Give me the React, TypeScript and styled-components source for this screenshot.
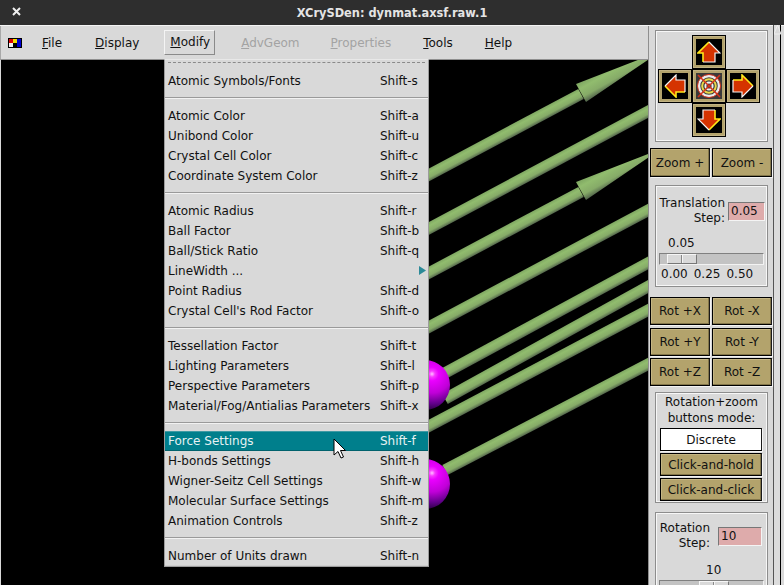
import React from "react";
import styled, { createGlobalStyle } from "styled-components";

const Global = createGlobalStyle`
  html, body { margin: 0; padding: 0; background: #d9d9d9; }
  body { font-family: "DejaVu Sans", sans-serif; font-size: 12px; color: #111; }
`;

const Window = styled.div`
  position: relative; width: 784px; height: 585px; overflow: hidden;
  display: flex; flex-direction: column; background: #d9d9d9;
`;
const TitleBar = styled.header`
  height: 25px; flex: none; background: #2e2e2e; border-bottom: 1px solid #f4f4f4;
  display: flex; align-items: center; justify-content: center; position: relative;
  color: #e4e4e4; font-weight: bold; font-size: 11.4px;
`;
const CloseIcon = styled.svg`
  position: absolute; left: 12px; top: 7px; width: 9px; height: 9px;
`;
const Body = styled.div`flex: 1; min-height: 0; display: flex;`;
const Left = styled.div`width: 648px; flex: none; display: flex; flex-direction: column;`;
const MenuBar = styled.nav`
  height: 33px; flex: none; display: flex; align-items: center; background: #d9d9d9;
  border-bottom: 1px solid #8f8f8f; border-left: 1px solid #a8a8a8;
`;
const MenuIcon = styled.svg`width: 14px; height: 10px; margin-left: 7px; flex: none;`;
const MenuBarItem = styled.span<{ $left: number; $off?: boolean; $open?: boolean }>`
  margin-left: ${p => p.$left}px;
  color: ${p => (p.$off ? "#a3a3a3" : "#111")};
  ${p => p.$open ? `
    padding: 4px 4px 5px 5px; border: 1px solid; border-color: #f4f4f4 #8a8a8a #8a8a8a #f4f4f4;
  ` : ""}
`;
const Canvas = styled.main`flex: 1; min-height: 0; margin-left: 1px; background: #000; overflow: hidden;`;
const SceneSvg = styled.svg`display: block; width: 647px; height: 525px;`;

const Menu = styled.div`
  position: absolute; left: 164px; top: 59px; width: 265px; height: 508px; box-sizing: border-box;
  background: #d9d9d9; border: 1px solid #9c9c9c; border-top-color: #e8e8e8; box-shadow: inset 0 -1px 0 #cfcfcf;
`;
const Tearoff = styled.div`
  height: 11px; margin: 0 1px; position: relative;
  &::after { content: ""; position: absolute; left: 2px; right: 2px; top: 2px; border-top: 1px dashed #8a8a8a; }
`;
const MenuRow = styled.div<{ $active?: boolean }>`
  position: relative; height: 20px; box-sizing: border-box; display: grid; grid-template-columns: 212px 1fr;
  align-items: center; padding-left: 3px; white-space: nowrap;
  background: ${p => (p.$active ? "#007f8c" : "transparent")};
  color: ${p => (p.$active ? "#e6f2f3" : "#111")};
  ${p => (p.$active ? "box-shadow: inset 0 1px 0 #3f9aa4, inset 0 -1px 0 #00626d;" : "")}
`;
const Sep = styled.div`
  height: 15px; box-sizing: border-box; padding-bottom: 2px; display: flex; align-items: center;
  &::after { content: ""; flex: 1; height: 1px; background: #9a9a9a; box-shadow: 0 1px 0 #f2f2f2; }
`;
const SubArrow = styled.svg`position: absolute; right: 2px; top: 5px; width: 7px; height: 9px;`;
const Pointer = styled.svg`position: absolute; left: 333px; top: 438px; width: 14px; height: 22px;`;

const Panel = styled.aside`
  flex: 1; min-width: 0; display: flex; border-left: 1px solid #8f8f8f;
`;
const PanelContent = styled.div`
  width: 123px; flex: none; margin-left: 1px; padding-top: 4px; overflow: hidden;
  display: flex; flex-direction: column;
`;
const ScrollBar = styled.div`
  width: 8px; flex: none; position: relative; box-sizing: border-box; background: #dcdcdc;
  border-left: 1px solid #555; border-right: 1px solid #000; margin-top: -1px;
`;
const ScrollArrow = styled.svg`position: absolute; left: 0; top: 0; width: 7px; height: 10px;`;
const Frame = styled.section<{ $h: number; $mt?: number; $pt?: number }>`
  margin: ${p => p.$mt ?? 0}px 5px 0 5px; height: ${p => p.$h}px; flex: none; box-sizing: border-box;
  border: 1px solid #8d8d8d; box-shadow: inset 0 0 0 1px #f7f7f7; padding: ${p => p.$pt ?? 4}px 3px 4px 3px; position: relative;
`;
const NavGrid = styled.div`
  display: grid; grid-template-columns: repeat(3, 34px); grid-template-rows: repeat(3, 34px);
  margin-left: -1px;
`;
const NavButton = styled.button<{ $col: number; $row: number }>`
  grid-column: ${p => p.$col}; grid-row: ${p => p.$row};
  width: 34px; height: 34px; padding: 0; box-sizing: border-box; background: #000;
  border: 1px solid #000; box-shadow: inset 0 0 0 1px #c2b384, inset 0 0 0 3px #b3a36c, inset 0 0 0 4px #000;
  display: flex; align-items: center; justify-content: center;
`;
const ArrowSvg = styled.svg<{ $rot: number }>`
  width: 24px; height: 24px; transform: rotate(${p => p.$rot}deg);
`;
const TargetSvg = styled.svg`width: 26px; height: 26px;`;
const ButtonPair = styled.div<{ $mt: number }>`
  display: grid; grid-template-columns: 60px 60px; column-gap: 2px; margin-top: ${p => p.$mt}px; flex: none;
`;
const TanButton = styled.button<{ $h?: number }>`
  height: ${p => p.$h ?? 28}px; padding: 0; box-sizing: border-box;
  background: #b3a36c; color: #111; font: 12px "DejaVu Sans", sans-serif; white-space: nowrap;
  border: 1px solid #000; border-right-color: #1a1a1a; box-shadow: 1px 1px 0 #f4f4f4, inset -1px -1px 0 #83764a, inset 1px 1px 0 #c5b684;
`;
const WhiteButton = styled(TanButton)`
  background: #fff; box-shadow: 1px 1px 0 #f4f4f4;
`;
const StepRow = styled.div<{ $cols: string; $mt: number; $gap: number }>`
  display: grid; grid-template-columns: ${p => p.$cols}; align-items: center; margin-top: ${p => p.$mt}px; column-gap: ${p => p.$gap}px;
`;
const StepLabel = styled.label`text-align: right; line-height: 15px; white-space: pre-line;`;
const StepEntry = styled.div<{ $h: number }>`
  height: ${p => p.$h}px; box-sizing: border-box; background: #deabab; padding: 1px 2px; line-height: 15px;
  border: 1px solid; border-color: #777 #f4f4f4 #f4f4f4 #777;
`;
const ScaleValue = styled.div<{ $pl: number; $mt: number }>`padding-left: ${p => p.$pl}px; margin-top: ${p => p.$mt}px; line-height: 15px;`;
const Trough = styled.div`
  height: 12px; margin: 2px 0 0 0; box-sizing: border-box; background: #c3c3c3; position: relative;
  border: 1px solid; border-color: #808080 #f2f2f2 #f2f2f2 #808080; display: flex;
`;
const Thumb = styled.div<{ $left: number }>`
  position: absolute; left: ${p => p.$left}px; top: 0; width: 30px; height: 10px; box-sizing: border-box;
  background: #d9d9d9; border: 1px solid; border-color: #f6f6f6 #777 #777 #f6f6f6;
  &::after { content: ""; position: absolute; left: 13px; top: 0; bottom: 0; width: 1px; background: #888; box-shadow: 1px 0 0 #f4f4f4; }
`;
const Ticks = styled.div`
  display: flex; gap: 6px; padding-left: 2px; margin-top: 2px; line-height: 15px;
`;
const ModeTitle = styled.div`text-align: center; line-height: 16px;`;
const ModeStack = styled.div`display: flex; flex-direction: column; gap: 2px; margin: 2px 2px 0 1px;`;

type Entry = { l: string; k: string; sub?: boolean; active?: boolean } | "sep";
const entries: Entry[] = [
  { l: "Atomic Symbols/Fonts", k: "Shift-s" }, "sep",
  { l: "Atomic Color", k: "Shift-a" }, { l: "Unibond Color", k: "Shift-u" },
  { l: "Crystal Cell Color", k: "Shift-c" }, { l: "Coordinate System Color", k: "Shift-z" }, "sep",
  { l: "Atomic Radius", k: "Shift-r" }, { l: "Ball Factor", k: "Shift-b" }, { l: "Ball/Stick Ratio", k: "Shift-q" },
  { l: "LineWidth ...", k: "", sub: true }, { l: "Point Radius", k: "Shift-d" }, { l: "Crystal Cell's Rod Factor", k: "Shift-o" }, "sep",
  { l: "Tessellation Factor", k: "Shift-t" }, { l: "Lighting Parameters", k: "Shift-l" }, { l: "Perspective Parameters", k: "Shift-p" },
  { l: "Material/Fog/Antialias Parameters", k: "Shift-x" }, "sep",
  { l: "Force Settings", k: "Shift-f", active: true }, { l: "H-bonds Settings", k: "Shift-h" },
  { l: "Wigner-Seitz Cell Settings", k: "Shift-w" }, { l: "Molecular Surface Settings", k: "Shift-m" },
  { l: "Animation Controls", k: "Shift-z" }, "sep",
  { l: "Number of Units drawn", k: "Shift-n" },
];

const shafts = [
  [419, 180.3, 581, 94], [419, 233.8, 660, 105], [419, 278.3, 581, 192], [419, 332.3, 660, 204],
  [445, 373, 660, 256.5], [445, 399, 660, 280], [419, 431.3, 660, 304], [445, 470, 660, 358],
];
const Stops = () => (
  <>
    <stop offset="0" stopColor="#7da561" />
    <stop offset="0.3" stopColor="#91bc6e" />
    <stop offset="0.7" stopColor="#86ab68" />
    <stop offset="1" stopColor="#4f6049" />
  </>
);

function Scene() {
  return (
    <SceneSvg viewBox="1 60 647 525">
      <defs>
        {shafts.map(([a, b, c, d], i) => {
          const len = Math.hypot(c - a, d - b), nx = (b - d) / len, ny = (c - a) / len;
          return (
            <linearGradient key={i} id={`s${i}`} gradientUnits="userSpaceOnUse"
              x1={a - nx * 6} y1={b - ny * 6} x2={a + nx * 6} y2={b + ny * 6}>
              <Stops />
            </linearGradient>
          );
        })}
        {[0, 98].map(dy => (
          <linearGradient key={dy} id={`c${dy}`} gradientUnits="userSpaceOnUse"
            x1={576} y1={84 + dy} x2={586} y2={102 + dy}>
            <Stops />
          </linearGradient>
        ))}
        <radialGradient id="ball" cx="0.64" cy="0.28" r="0.76">
          <stop offset="0" stopColor="#ffc0ff" />
          <stop offset="0.08" stopColor="#f838ff" />
          <stop offset="0.18" stopColor="#ea00ff" />
          <stop offset="0.5" stopColor="#c000d8" />
          <stop offset="0.78" stopColor="#62008a" />
          <stop offset="1" stopColor="#1e0030" />
        </radialGradient>
      </defs>
      {shafts.map(([a, b, c, d], i) => (
        <line key={i} x1={a} y1={b} x2={c} y2={d} stroke={`url(#s${i})`} strokeWidth={11.5} />
      ))}
      {[0, 98].map(dy => (
        <polygon key={dy} points={`576,${84 + dy} 586,${102 + dy} 661,${51 + dy}`} fill={`url(#c${dy})`} />
      ))}
      <circle cx={425} cy={385} r={25} fill="url(#ball)" />
      <circle cx={425} cy={484} r={25} fill="url(#ball)" />
    </SceneSvg>
  );
}

const Arrow = ({ rot }: { rot: number }) => (
  <ArrowSvg $rot={rot} viewBox="0 0 24 24">
    <polygon points="12,2 23,13 18,13 18,22 6,22 6,13 1,13" fill="#d53300" />
    <polyline points="12,2 1,13 6,13 6,22" fill="none" stroke="#ffe81a" strokeWidth={1.6} />
    <polyline points="12,2 23,13 18,13 18,22 6,22" fill="none" stroke="#f5f5f5" strokeWidth={1.2} />
  </ArrowSvg>
);

const Target = () => (
  <TargetSvg viewBox="0 0 26 26">
    <rect width="26" height="26" fill="#3a3a3a" />
    <circle cx="13" cy="13" r="10" fill="none" stroke="#ececec" strokeWidth="2.5" />
    <circle cx="13" cy="13" r="6.8" fill="none" stroke="#e8d84a" strokeWidth="2" />
    <circle cx="13" cy="13" r="3.6" fill="none" stroke="#f2f2f2" strokeWidth="2" />
    <circle cx="13" cy="13" r="11.5" fill="none" stroke="#d5331c" strokeWidth="1" />
    <line x1="2" y1="2" x2="24" y2="24" stroke="#d5331c" strokeWidth="1.6" />
    <line x1="24" y1="2" x2="2" y2="24" stroke="#d5331c" strokeWidth="1.6" />
  </TargetSvg>
);

export default function App() {
  return (
    <Window>
      <Global />
      <TitleBar>
        <CloseIcon viewBox="0 0 9 9">
          <path d="M1 1 L8 8 M8 1 L1 8" stroke="#efefef" strokeWidth="2" />
        </CloseIcon>
        XCrySDen: dynmat.axsf.raw.1
      </TitleBar>
      <Body>
        <Left>
          <MenuBar>
            <MenuIcon viewBox="0 0 14 10">
              <rect width="14" height="10" fill="#000" />
              <rect x="1" y="1" width="4" height="4" fill="#e00000" />
              <rect x="5" y="1" width="4" height="4" fill="#f2e000" />
              <rect x="9" y="1" width="4" height="8" fill="#0000d0" />
              <rect x="1" y="5" width="4" height="4" fill="#f4f4f4" />
            </MenuIcon>
            <MenuBarItem $left={20}><u>F</u>ile</MenuBarItem>
            <MenuBarItem $left={33}><u>D</u>isplay</MenuBarItem>
            <MenuBarItem $left={25} $open><u>M</u>odify</MenuBarItem>
            <MenuBarItem $left={26} $off><u>A</u>dvGeom</MenuBarItem>
            <MenuBarItem $left={31} $off><u>P</u>roperties</MenuBarItem>
            <MenuBarItem $left={32}><u>T</u>ools</MenuBarItem>
            <MenuBarItem $left={32}><u>H</u>elp</MenuBarItem>
          </MenuBar>
          <Canvas><Scene /></Canvas>
        </Left>
        <Panel>
          <PanelContent>
            <Frame $h={112}>
              <NavGrid>
                <NavButton $col={2} $row={1}><Arrow rot={0} /></NavButton>
                <NavButton $col={1} $row={2}><Arrow rot={-90} /></NavButton>
                <NavButton $col={2} $row={2}><Target /></NavButton>
                <NavButton $col={3} $row={2}><Arrow rot={90} /></NavButton>
                <NavButton $col={2} $row={3}><Arrow rot={180} /></NavButton>
              </NavGrid>
            </Frame>
            <ButtonPair $mt={6}>
              <TanButton $h={29}>Zoom +</TanButton>
              <TanButton $h={29}>Zoom -</TanButton>
            </ButtonPair>
            <Frame $h={102} $mt={8}>
              <StepRow $cols="66px 37px" $mt={6} $gap={3}>
                <StepLabel>{"Translation\nStep:"}</StepLabel>
                <StepEntry $h={19}>0.05</StepEntry>
              </StepRow>
              <ScaleValue $pl={9} $mt={10}>0.05</ScaleValue>
              <Trough><Thumb $left={7} /></Trough>
              <Ticks><span>0.00</span><span>0.25</span><span>0.50</span></Ticks>
            </Frame>
            <ButtonPair $mt={10}><TanButton>Rot +X</TanButton><TanButton>Rot -X</TanButton></ButtonPair>
            <ButtonPair $mt={3}><TanButton>Rot +Y</TanButton><TanButton>Rot -Y</TanButton></ButtonPair>
            <ButtonPair $mt={2}><TanButton>Rot +Z</TanButton><TanButton>Rot -Z</TanButton></ButtonPair>
            <Frame $h={111} $mt={6} $pt={1}>
              <ModeTitle>Rotation+zoom</ModeTitle>
              <ModeTitle>buttons mode:</ModeTitle>
              <ModeStack>
                <WhiteButton $h={23}>Discrete</WhiteButton>
                <TanButton $h={23}>Click-and-hold</TanButton>
                <TanButton $h={23}>Click-and-click</TanButton>
              </ModeStack>
            </Frame>
            <Frame $h={120} $mt={9}>
              <StepRow $cols="51px 44px" $mt={4} $gap={8}>
                <StepLabel>{"Rotation\nStep:"}</StepLabel>
                <StepEntry $h={19}>10</StepEntry>
              </StepRow>
              <ScaleValue $pl={47} $mt={12}>10</ScaleValue>
              <Trough><Thumb $left={39} /></Trough>
            </Frame>
          </PanelContent>
          <ScrollBar>
            <ScrollArrow viewBox="0 0 7 10">
              <polygon points="3.5,0 7,9 0,9" fill="#d9d9d9" stroke="#f4f4f4" strokeWidth="0.8" />
            </ScrollArrow>
          </ScrollBar>
        </Panel>
      </Body>
      <Menu>
        <Tearoff />
        {entries.map((e, i) =>
          e === "sep" ? (
            <Sep key={i} />
          ) : (
            <MenuRow key={i} $active={e.active}>
              <span>{e.l}</span>
              <span>{e.k}</span>
              {e.sub && (
                <SubArrow viewBox="0 0 7 9">
                  <polygon points="0,0 7,4.5 0,9" fill="#2c8a98" />
                </SubArrow>
              )}
            </MenuRow>
          )
        )}
      </Menu>
      <Pointer viewBox="0 0 14 22">
        <path d="M1 1 L1 17 L5 13.5 L8 20 L10.5 19 L7.5 12.5 L12.5 12.5 Z" fill="#fff" stroke="#000" strokeWidth="1" />
      </Pointer>
    </Window>
  );
}
